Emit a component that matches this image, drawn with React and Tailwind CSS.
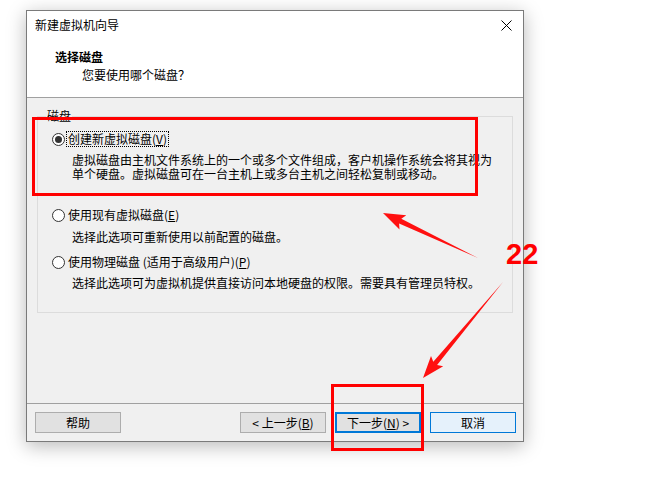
const cjk = { fontFamily: '"Noto Sans CJK SC", "Microsoft YaHei", sans-serif' };

function Radio({ checked }) {
    return (
        <span className="w-[13px] h-[13px] rounded-full border border-[#333] bg-white flex items-center justify-center shrink-0">
            {checked && <span className="w-[7px] h-[7px] rounded-full bg-[#333]" />}
        </span>
    );
}

function Btn({ children, kind }) {
    const base = "w-[86px] h-[21px] flex items-center justify-center text-[12px] leading-[14px] text-black";
    if (kind === "default") return <div className={`${base} bg-[#e1e1e1] border-2 border-[#0078d7]`}>{children}</div>;
    if (kind === "hover") return <div className={`${base} bg-[#e5f1fb] border border-[#0078d7]`}>{children}</div>;
    return <div className={`${base} bg-[#e1e1e1] border border-[#adadad]`}>{children}</div>;
}

export default function App() {
    return (
        <div className="relative w-[652px] h-[482px] bg-white overflow-hidden text-black" style={cjk}>
            <div className="pt-[10px] pl-[26px]">
                <div className="w-[498px] h-[432px] border border-[#7a7a7a] bg-[#f0f0f0] flex flex-col shadow-[0_4px_18px_rgba(0,0,0,0.28)]">
                    {/* header */}
                    <div className="bg-white h-[86px] flex flex-col">
                        <div className="h-[27px] flex items-center justify-between pl-[8px] pr-[10px] pt-[1px]">
                            <span className="text-[12px] leading-[14px]">新建虚拟机向导</span>
                            <svg width="11" height="11" viewBox="0 0 11 11" className="mr-[1px]">
                                <path d="M0.5 0.5 L10.5 10.5 M10.5 0.5 L0.5 10.5" stroke="#000" strokeWidth="1" />
                            </svg>
                        </div>
                        <div className="pl-[28px] pt-[11px] text-[12px] leading-[16px] font-bold">选择磁盘</div>
                        <div className="pl-[55px] pt-[2px] text-[12px] leading-[16px]">您要使用哪个磁盘？</div>
                    </div>
                    <div className="h-px bg-[#a0a0a0]" />
                    {/* body */}
                    <div className="flex-1 px-[10px] pt-[18px]">
                        <div className="relative h-[197px] border border-[#dcdcdc] pt-[14px]">
                            <span className="absolute left-[8px] top-[-8px] bg-[#f0f0f0] text-[12px] leading-[14px] px-px">磁盘</span>
                            <div className="flex items-center h-[16px] pl-[14px]">
                                <Radio checked />
                                <span className="ml-[1px] border border-dotted border-black px-px text-[12px] leading-[14px]">
                                    创建新虚拟磁盘(<u>V</u>)
                                </span>
                            </div>
                            <div className="mt-[6px] pl-[34px] text-[12px] leading-[14px]">
                                <div>虚拟磁盘由主机文件系统上的一个或多个文件组成，客户机操作系统会将其视为</div>
                                <div>单个硬盘。虚拟磁盘可在一台主机上或多台主机之间轻松复制或移动。</div>
                            </div>
                            <div className="mt-[26px] flex items-center h-[16px] pl-[14px]">
                                <Radio />
                                <span className="ml-[3px] text-[12px] leading-[14px]">使用现有虚拟磁盘(<u>E</u>)</span>
                            </div>
                            <div className="mt-[7px] pl-[34px] text-[12px] leading-[14px]">选择此选项可重新使用以前配置的磁盘。</div>
                            <div className="mt-[10px] flex items-center h-[16px] pl-[14px]">
                                <Radio />
                                <span className="ml-[3px] text-[12px] leading-[14px]">使用物理磁盘 (适用于高级用户)(<u>P</u>)</span>
                            </div>
                            <div className="mt-[6px] pl-[34px] text-[12px] leading-[14px]">选择此选项可为虚拟机提供直接访问本地硬盘的权限。需要具有管理员特权。</div>
                        </div>
                    </div>
                    <div className="h-px bg-[#a0a0a0]" />
                    {/* footer */}
                    <div className="h-[37px] flex items-start pt-[8px] pl-[8px] pr-[7px]">
                        <Btn>帮助</Btn>
                        <div className="flex-1" />
                        <div className="flex gap-[9px]">
                            <Btn>&lt; 上一步(<u>B</u>)</Btn>
                            <Btn kind="default">下一步(<u>N</u>) &gt;</Btn>
                            <Btn kind="hover">取消</Btn>
                        </div>
                    </div>
                </div>
            </div>

            {/* red annotations */}
            <div className="absolute left-[32px] top-[117px] w-[446px] h-[79px] border-[3px] border-[#ff0000]" />
            <div className="absolute left-[331px] top-[384px] w-[93px] h-[67px] border-[3px] border-[#ff0000]" />
            <svg className="absolute left-0 top-0 pointer-events-none" width="652" height="482">
                <polygon fill="#ff1010" points="383,213 406.3,215.2 401.3,218.8 478,258 399.1,223.4 399.5,229.6" />
                <polygon fill="#ff1010" points="423,378 443.2,366.2 437.1,365 503,282 433.3,361.8 431,356" />
            </svg>
            <span
                className="absolute left-[506px] top-[236px] text-[29px] leading-[36px] font-bold text-[#ff0000]"
                style={{ fontFamily: '"Liberation Sans", Arial, sans-serif' }}
            >
                22
            </span>
        </div>
    );
}
